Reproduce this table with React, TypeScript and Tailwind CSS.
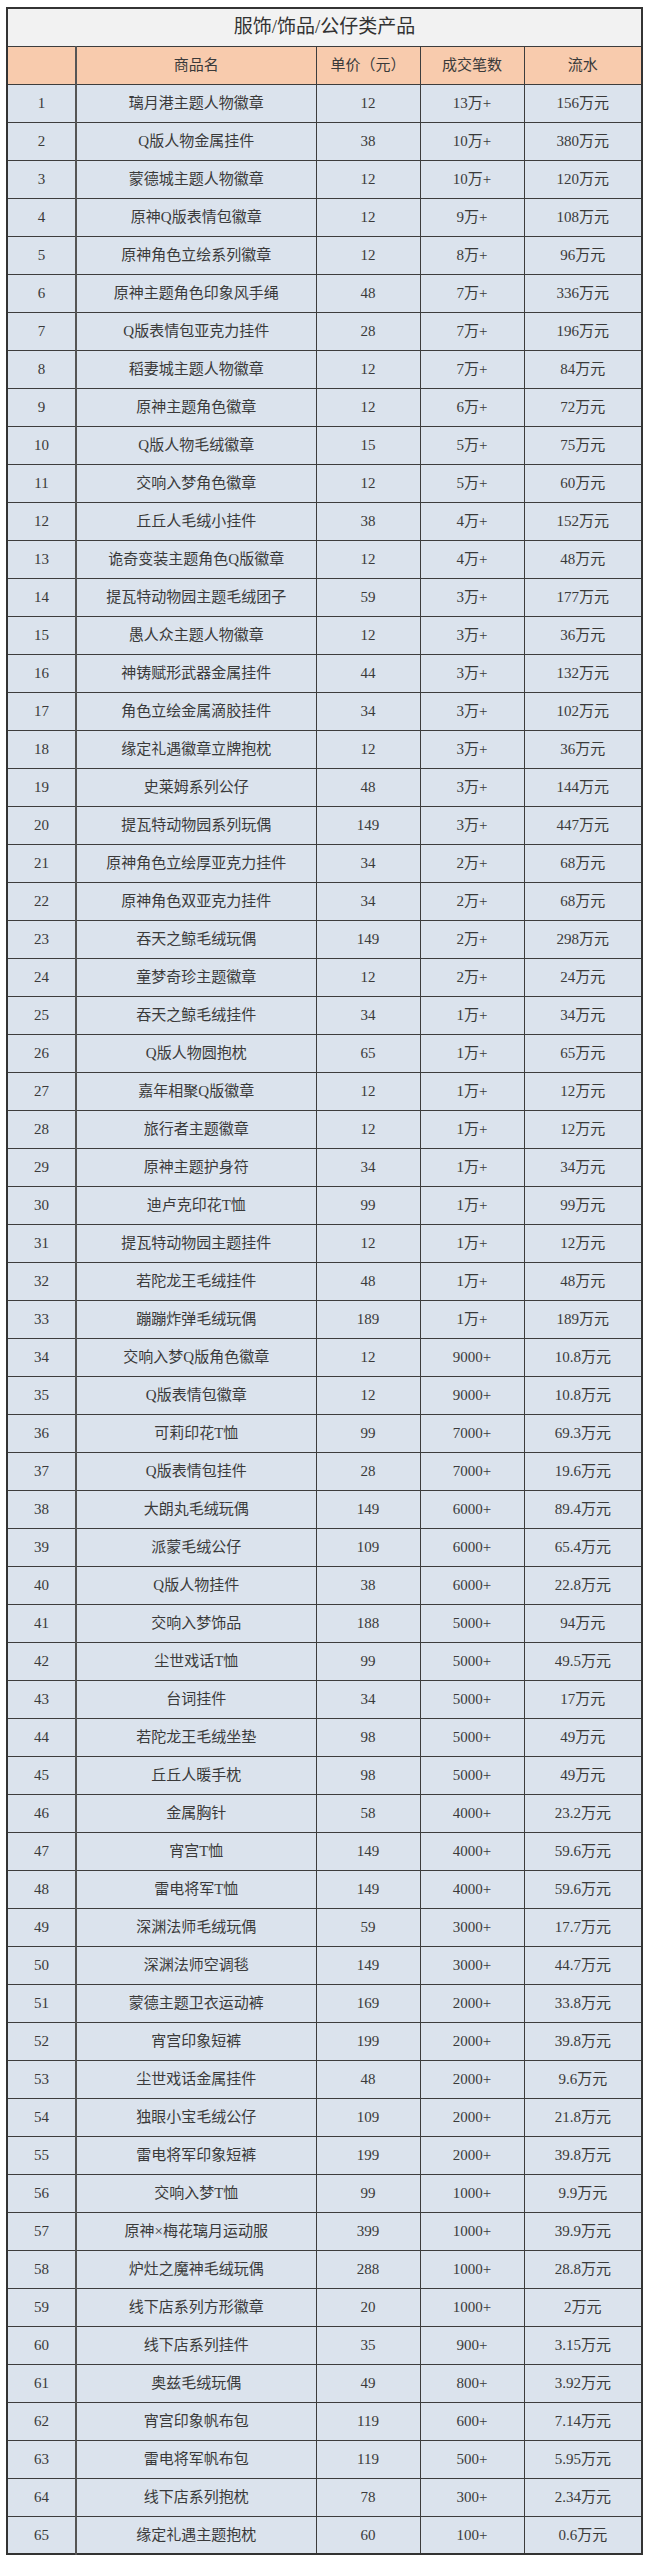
import React from "react";

type Row = [string, number, string, string];

const rows: Row[] = [
  ["璃月港主题人物徽章", 12, "13万+", "156万元"],
  ["Q版人物金属挂件", 38, "10万+", "380万元"],
  ["蒙德城主题人物徽章", 12, "10万+", "120万元"],
  ["原神Q版表情包徽章", 12, "9万+", "108万元"],
  ["原神角色立绘系列徽章", 12, "8万+", "96万元"],
  ["原神主题角色印象风手绳", 48, "7万+", "336万元"],
  ["Q版表情包亚克力挂件", 28, "7万+", "196万元"],
  ["稻妻城主题人物徽章", 12, "7万+", "84万元"],
  ["原神主题角色徽章", 12, "6万+", "72万元"],
  ["Q版人物毛绒徽章", 15, "5万+", "75万元"],
  ["交响入梦角色徽章", 12, "5万+", "60万元"],
  ["丘丘人毛绒小挂件", 38, "4万+", "152万元"],
  ["诡奇变装主题角色Q版徽章", 12, "4万+", "48万元"],
  ["提瓦特动物园主题毛绒团子", 59, "3万+", "177万元"],
  ["愚人众主题人物徽章", 12, "3万+", "36万元"],
  ["神铸赋形武器金属挂件", 44, "3万+", "132万元"],
  ["角色立绘金属滴胶挂件", 34, "3万+", "102万元"],
  ["缘定礼遇徽章立牌抱枕", 12, "3万+", "36万元"],
  ["史莱姆系列公仔", 48, "3万+", "144万元"],
  ["提瓦特动物园系列玩偶", 149, "3万+", "447万元"],
  ["原神角色立绘厚亚克力挂件", 34, "2万+", "68万元"],
  ["原神角色双亚克力挂件", 34, "2万+", "68万元"],
  ["吞天之鲸毛绒玩偶", 149, "2万+", "298万元"],
  ["童梦奇珍主题徽章", 12, "2万+", "24万元"],
  ["吞天之鲸毛绒挂件", 34, "1万+", "34万元"],
  ["Q版人物圆抱枕", 65, "1万+", "65万元"],
  ["嘉年相聚Q版徽章", 12, "1万+", "12万元"],
  ["旅行者主题徽章", 12, "1万+", "12万元"],
  ["原神主题护身符", 34, "1万+", "34万元"],
  ["迪卢克印花T恤", 99, "1万+", "99万元"],
  ["提瓦特动物园主题挂件", 12, "1万+", "12万元"],
  ["若陀龙王毛绒挂件", 48, "1万+", "48万元"],
  ["蹦蹦炸弹毛绒玩偶", 189, "1万+", "189万元"],
  ["交响入梦Q版角色徽章", 12, "9000+", "10.8万元"],
  ["Q版表情包徽章", 12, "9000+", "10.8万元"],
  ["可莉印花T恤", 99, "7000+", "69.3万元"],
  ["Q版表情包挂件", 28, "7000+", "19.6万元"],
  ["大朗丸毛绒玩偶", 149, "6000+", "89.4万元"],
  ["派蒙毛绒公仔", 109, "6000+", "65.4万元"],
  ["Q版人物挂件", 38, "6000+", "22.8万元"],
  ["交响入梦饰品", 188, "5000+", "94万元"],
  ["尘世戏话T恤", 99, "5000+", "49.5万元"],
  ["台词挂件", 34, "5000+", "17万元"],
  ["若陀龙王毛绒坐垫", 98, "5000+", "49万元"],
  ["丘丘人暖手枕", 98, "5000+", "49万元"],
  ["金属胸针", 58, "4000+", "23.2万元"],
  ["宵宫T恤", 149, "4000+", "59.6万元"],
  ["雷电将军T恤", 149, "4000+", "59.6万元"],
  ["深渊法师毛绒玩偶", 59, "3000+", "17.7万元"],
  ["深渊法师空调毯", 149, "3000+", "44.7万元"],
  ["蒙德主题卫衣运动裤", 169, "2000+", "33.8万元"],
  ["宵宫印象短裤", 199, "2000+", "39.8万元"],
  ["尘世戏话金属挂件", 48, "2000+", "9.6万元"],
  ["独眼小宝毛绒公仔", 109, "2000+", "21.8万元"],
  ["雷电将军印象短裤", 199, "2000+", "39.8万元"],
  ["交响入梦T恤", 99, "1000+", "9.9万元"],
  ["原神×梅花璃月运动服", 399, "1000+", "39.9万元"],
  ["炉灶之魔神毛绒玩偶", 288, "1000+", "28.8万元"],
  ["线下店系列方形徽章", 20, "1000+", "2万元"],
  ["线下店系列挂件", 35, "900+", "3.15万元"],
  ["奥兹毛绒玩偶", 49, "800+", "3.92万元"],
  ["宵宫印象帆布包", 119, "600+", "7.14万元"],
  ["雷电将军帆布包", 119, "500+", "5.95万元"],
  ["线下店系列抱枕", 78, "300+", "2.34万元"],
  ["缘定礼遇主题抱枕", 60, "100+", "0.6万元"],
];

const cell = "border border-[#3d3d3d] h-[38px] p-0 text-center align-middle";

export default function App() {
  return (
    <div className="w-[647px] min-h-[2560px] bg-white pt-[7px] pl-[6px] text-[#3a3a3a] font-['Liberation_Serif','Noto_Sans_CJK_SC',serif] text-[15px]">
      <table className="w-[635px] table-fixed border-collapse border-2 border-[#333]">
        <colgroup>
          <col className="w-[69px]" />
          <col className="w-[240px]" />
          <col className="w-[104px]" />
          <col className="w-[104px]" />
          <col className="w-[118px]" />
        </colgroup>
        <thead>
          <tr>
            <th colSpan={5} className={`${cell} bg-[#f2f2f2] text-[19px] font-normal text-[#333]`}>
              服饰/饰品/公仔类产品
            </th>
          </tr>
          <tr className="bg-[#f8cbad]">
            <th className={`${cell} border-r-2 border-r-[#555] font-normal`}></th>
            <th className={`${cell} font-normal`}>商品名</th>
            <th className={`${cell} font-normal`}>单价（元）</th>
            <th className={`${cell} font-normal`}>成交笔数</th>
            <th className={`${cell} font-normal`}>流水</th>
          </tr>
        </thead>
        <tbody>
          {rows.map(([name, price, count, flow], i) => (
            <tr key={i} className="bg-[#dbe3ed]">
              <td className={`${cell} border-r-2 border-r-[#555]`}>{i + 1}</td>
              <td className={cell}>{name}</td>
              <td className={cell}>{price}</td>
              <td className={cell}>{count}</td>
              <td className={cell}>{flow}</td>
            </tr>
          ))}
        </tbody>
      </table>
    </div>
  );
}
